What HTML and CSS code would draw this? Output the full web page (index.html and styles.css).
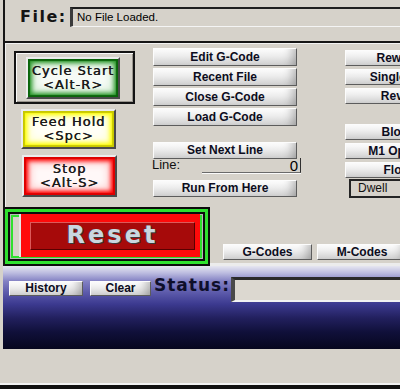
FILE: index.html
```
<!DOCTYPE html>
<html lang="en">
<head>
    <meta charset="UTF-8">
    <meta name="viewport" content="width=device-width, initial-scale=1.0">
    <title>Program Run</title>
    <link rel="stylesheet" href="styles.css">
</head>
<body>
    <div class="app">
        <div class="main">
            <div class="file-bar">
                <span class="file-label">File:</span>
                <div class="file-field">No File Loaded.</div>
            </div>
            <div class="panel">
                <div class="panel-top">
                    <div class="run-col">
                        <div class="cycle-frame">
                            <div class="cbtn cbtn-green">Cycle Start<br>&lt;Alt-R&gt;</div>
                        </div>
                        <div class="cbtn cbtn-yellow feed">Feed Hold<br>&lt;Spc&gt;</div>
                        <div class="cbtn cbtn-red stop">Stop<br>&lt;Alt-S&gt;</div>
                    </div>
                    <div class="file-col">
                        <div class="btn file-btn">Edit G-Code</div>
                        <div class="btn file-btn">Recent File</div>
                        <div class="btn file-btn">Close G-Code</div>
                        <div class="btn file-btn">Load G-Code</div>
                        <div class="btn file-btn set-next">Set Next Line</div>
                        <div class="line-row">
                            <span class="line-label">Line:</span>
                            <div class="line-field">0</div>
                        </div>
                        <div class="btn file-btn run-here">Run From Here</div>
                    </div>
                    <div class="mode-col">
                        <div class="btn mode-btn">Rewind Ctrl-W</div>
                        <div class="btn mode-btn">Single BLK Alt-N</div>
                        <div class="btn mode-btn">Reverse Run</div>
                        <div class="btn mode-btn group">Block Delete</div>
                        <div class="btn mode-btn">M1 Optional Stop</div>
                        <div class="btn mode-btn">Flood Ctrl-F</div>
                        <div class="dwell">Dwell</div>
                    </div>
                </div>
                <div class="panel-bottom">
                    <div class="reset-frame">
                        <div class="reset-btn">
                            <div class="reset-face">Reset</div>
                        </div>
                    </div>
                    <div class="btn code-btn gcodes">G-Codes</div>
                    <div class="btn code-btn mcodes">M-Codes</div>
                </div>
            </div>
        </div>
        <div class="status-area">
            <div class="btn small-btn history">History</div>
            <div class="btn small-btn clear">Clear</div>
            <span class="status-label">Status:</span>
            <div class="status-field"></div>
        </div>
        <div class="footer"></div>
        <div class="footer-edge"></div>
    </div>
</body>
</html>
```

FILE: styles.css
```
body {
    margin: 0;
    width: 400px;
    height: 389px;
    overflow: hidden;
    background-color: #d6d2ca;
    font-family: "Liberation Sans", Arial, sans-serif;
    color: #0c0c1c;
}

.app {
    width: 400px;
}

/* zona de cima: arquivo + painel */
.main {
    margin-left: 3px;
    border-left: 2px solid #161616;
    overflow: hidden;
}

.file-bar {
    height: 41px;
    display: flex;
    align-items: flex-start;
}

.file-label {
    width: 50px;
    flex-shrink: 0;
    margin: 7px 0 0 15px;
    font-family: "DejaVu Sans", sans-serif;
    font-weight: bold;
    font-size: 16px;
    letter-spacing: 1.5px;
    color: #141414;
}

.file-field {
    flex: 1;
    margin-top: 7px;
    height: 17px;
    line-height: 17px;
    padding-left: 4px;
    border-top: 2px solid #1e1e1e;
    border-left: 3px solid #3a3a3a;
    border-bottom: 1px solid #f4f4f4;
    font-size: 11.5px;
    color: #000;
}

.panel {
    border-top: 2px solid #161616;
    height: 223px;
    box-shadow: inset 1px 1px 0 #f2f2f2, inset 0 -3px 0 #ececec;
    overflow: hidden;
}

.panel-top {
    height: 164px;
    display: flex;
}

/* coluna dos botoes coloridos */
.run-col {
    width: 147px;
    flex-shrink: 0;
    box-sizing: border-box;
    padding: 8px 0 0 9px;
}

.cycle-frame {
    width: 121px;
    height: 53px;
    box-sizing: border-box;
    border: 2px solid #141414;
    padding: 4px 0 0 10px;
    box-shadow: inset 1px 1px 0 #fafafa, inset -1px -1px 0 #9a968e;
}

.cbtn {
    box-sizing: border-box;
    width: 94px;
    height: 42px;
    border: 2px solid;
    border-color: #ececec #4a4a4a #4a4a4a #ececec;
    display: flex;
    flex-direction: column;
    justify-content: center;
    text-align: center;
    font-family: "DejaVu Sans", sans-serif;
    font-size: 13px;
    line-height: 14px;
    letter-spacing: 1px;
    color: #1a1a1a;
    text-shadow: 0.4px 0 0 #1a1a1a;
}

.cbtn-green {
    background-color: #f6fbf6;
    box-shadow: inset 0 0 1px 2px #0a640a, inset 0 0 4px 4px #2e9a2e, inset 0 0 9px 6px #bfe2bf;
}

.cbtn-yellow {
    background-color: #fffff6;
    box-shadow: inset 0 0 1px 2px #c8c800, inset 0 0 4px 4px #ffff00, inset 0 0 9px 6px #ffffb4;
}

.cbtn-red {
    background-color: #fff8f8;
    box-shadow: inset 0 0 1px 2px #dd0000, inset 0 0 4px 4px #ff0000, inset 0 0 9px 6px #ffbaba;
}

.feed {
    width: 95px;
    height: 40px;
    margin: 5px 0 0 7px;
}

.stop {
    width: 95px;
    height: 42px;
    margin: 6px 0 0 8px;
}

/* botoes cinza */
.btn {
    box-sizing: border-box;
    border: 1px solid;
    border-color: #fcfcfc #5c5c5c #5c5c5c #fcfcfc;
    background: linear-gradient(to bottom, #fdfdfd, #ececec 45%, #cfcfcf);
    box-shadow: inset -12px 0 10px -8px rgba(0, 0, 0, 0.25);
    font-weight: bold;
    font-size: 12px;
    text-align: center;
    color: #0c0c20;
    white-space: nowrap;
}

.file-col {
    width: 150px;
    flex-shrink: 0;
    padding-top: 5px;
}

.file-btn {
    width: 144px;
    height: 18px;
    line-height: 16px;
    margin: 0 0 2px 1px;
}

.set-next {
    margin-top: 16px;
    margin-bottom: 0;
    height: 17px;
    line-height: 15px;
}

.line-row {
    height: 21px;
    display: flex;
    align-items: flex-start;
}

.line-label {
    width: 50px;
    margin-top: -2px;
    font-size: 13px;
    line-height: 15px;
    color: #101010;
}

.line-field {
    width: 99px;
    height: 15px;
    box-sizing: border-box;
    margin-top: -1px;
    padding-right: 2px;
    border-right: 1px solid #303030;
    border-bottom: 1px solid #6a6a6a;
    box-shadow: 0 1px 0 #fafafa;
    text-align: right;
    font-size: 15px;
    line-height: 15px;
    color: #000;
}

.run-here {
    height: 17px;
    line-height: 15px;
}

.mode-col {
    flex-shrink: 0;
    margin-left: 43px;
    padding-top: 7px;
}

.mode-btn {
    width: 145px;
    height: 16px;
    line-height: 14px;
    margin-bottom: 3px;
}

.mode-btn.group {
    margin-top: 20px;
}

.dwell {
    width: 110px;
    height: 19px;
    box-sizing: border-box;
    margin: -2px 0 0 4px;
    padding-left: 7px;
    border: 2px solid;
    border-color: #242424 #e8e8e8 #242424 #242424;
    font-size: 12px;
    line-height: 15px;
    color: #101010;
}

/* reset e codigos */
.panel-bottom {
    height: 59px;
    display: flex;
    align-items: flex-end;
}

.reset-frame {
    width: 205px;
    height: 59px;
    flex-shrink: 0;
    box-sizing: border-box;
    border: 2px solid #0c0c0c;
    border-left: none;
    padding: 5px 8px 7px 16px;
    box-shadow: inset 0 0 0 3px #2fe02f, inset 0 0 0 5px #0c0c0c, inset 0 0 0 6px #b8b8b8, inset 0 0 0 8px #2fe02f;
}

.reset-btn {
    height: 43px;
    box-sizing: border-box;
    padding: 8px 5px 7px 9px;
    background-color: #ff0a0a;
    box-shadow: -2px 0 0 #e6e6e6;
}

.reset-face {
    height: 28px;
    box-sizing: border-box;
    border: 1px solid;
    border-color: #dc5a5a #5a0000 #5a0000 #dc5a5a;
    background-color: #a60a0a;
    text-align: center;
    font-family: "DejaVu Sans", sans-serif;
    font-weight: bold;
    font-size: 24px;
    line-height: 25px;
    letter-spacing: 3px;
    color: #cad7df;
    text-shadow: 1px 1px 0 #3a3a3a, -1px 0 0 #5a3030;
}

.code-btn {
    width: 90px;
    height: 16px;
    line-height: 14px;
    margin-bottom: 6px;
    flex-shrink: 0;
}

.gcodes {
    margin-left: 13px;
    width: 89px;
}

.mcodes {
    margin-left: 5px;
}

/* faixa de status azul */
.status-area {
    margin-left: 3px;
    height: 83px;
    display: flex;
    align-items: flex-start;
    padding-left: 6px;
    background: linear-gradient(to bottom, #e6e6f0 0px, #bcbce0 7px, #8482c4 15px, #5e5cac 26px, #3c3a90 38px, #22205e 52px, #10103a 66px, #06061e 83px);
    overflow: hidden;
}

.small-btn {
    height: 15px;
    line-height: 13px;
    margin-top: 15px;
    flex-shrink: 0;
}

.history {
    width: 74px;
}

.clear {
    width: 61px;
    margin-left: 7px;
}

.status-label {
    width: 77px;
    flex-shrink: 0;
    margin: 8px 0 0 3px;
    font-family: "DejaVu Sans", sans-serif;
    font-weight: bold;
    font-size: 17px;
    line-height: 22px;
    letter-spacing: 1px;
    color: #0e0e2a;
}

.status-field {
    flex: 1;
    height: 20px;
    margin-top: 11px;
    background-color: #dcd8d0;
    border-top: 3px solid #2a2a2a;
    border-left: 4px solid #4a4a4a;
    border-bottom: 2px solid #f2f2f2;
}

.footer {
    height: 34px;
    border-bottom: 2px solid #f2f2f2;
}

.footer-edge {
    height: 4px;
    background-color: #111;
}
```
